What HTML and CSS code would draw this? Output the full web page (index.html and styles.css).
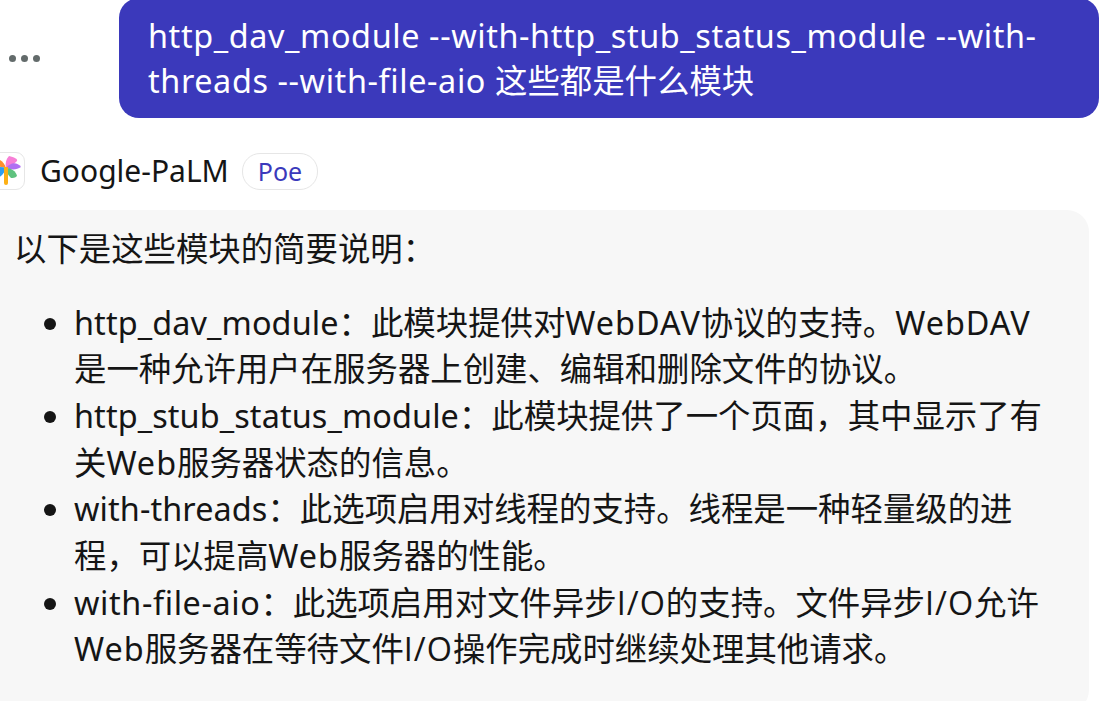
FILE: index.html
```html
<!DOCTYPE html>
<html lang="zh-CN">
<head>
    <meta charset="UTF-8">
    <title>Google-PaLM</title>
    <link rel="stylesheet" href="styles.css">
</head>
<body>
    <div class="chat">
        <!-- Question -->
        <div class="question-row">
            <div class="more-dots"><span></span><span></span><span></span></div>
            <div class="bubble"><span class="en-wide">http_dav_module --with-http_stub_status_module --with-</span><br><span class="en-wide">threads --with-file-aio </span>这些都是什么模块</div>
        </div>

        <!-- Bot name -->
        <div class="bot-row">
            <div class="bot-logo">
                <svg viewBox="0 0 30 30" width="30" height="30">
                    <path d="M15 12 C9 11 3 10 0 5 C5 1 12 3 15 12Z" fill="#ff8f2e"/>
                    <path d="M15 12 C14 7 15 3 18 0 C23 1 27 3 26 5 C23 8 19 11 15 12Z" fill="#f77fd6"/>
                    <path d="M15 12 C20 6 26 6 30 11 C26 14 20 14 15 12Z" fill="#b06ff2"/>
                    <path d="M15 12 C9 10 3 11 0 15 C1 19 4 22 7 22 C11 20 14 16 15 12Z" fill="#2f9ff0"/>
                    <path d="M15 12 C20 12 25 15 26 20 C24 22 22 22 20 22 C17 19 15 16 15 12Z" fill="#5fc27e"/>
                    <path d="M13 11 h4 v16 a2 2 0 0 1 -4 0Z" fill="#fdb015"/>
                </svg>
            </div>
            <span class="bot-name">Google-PaLM</span>
            <span class="bot-tag">Poe</span>
        </div>

        <!-- Answer -->
        <div class="answer">
            <p>以下是这些模块的简要说明：</p>
            <ul>
                <li><span class="en">http_dav_module</span>：此模块提供对<span class="en-caps">WebDAV</span>协议的支持。<span class="en-caps">WebDAV</span><br>是一种允许用户在服务器上创建、编辑和删除文件的协议。</li>
                <li><span class="en">http_stub_status_module</span>：此模块提供了一个页面，其中显示了有<br>关<span class="en-caps">Web</span>服务器状态的信息。</li>
                <li><span class="en">with-threads</span>：此选项启用对线程的支持。线程是一种轻量级的进<br>程，可以提高<span class="en-caps">Web</span>服务器的性能。</li>
                <li><span class="en-wide">with-file-aio</span>：此选项启用对文件异步<span class="io">I/O</span>的支持。文件异步<span class="io">I/O</span>允许<br><span class="en-caps">Web</span>服务器在等待文件<span class="io">I/O</span>操作完成时继续处理其他请求。</li>
            </ul>
        </div>
    </div>
</body>
</html>
```

FILE: styles.css
```css
html, body {
    margin: 0;
    padding: 0;
    height: 701px;
    overflow: hidden;
    background: white;
}
body {
    font-family: "Noto Sans", "Noto Sans CJK SC", sans-serif;
    font-size: 32.4px;
    line-height: 46.67px;
    color: #151515;
}
.en {
    letter-spacing: 0.1px;
}
.en-wide {
    letter-spacing: 0.6px;
}
.en-caps {
    letter-spacing: 1px;
}
.io {
    font-family: "Open Sans", sans-serif;
    letter-spacing: 1px;
}
.chat {
    margin-top: -2px;
}
.question-row {
    display: flex;
    align-items: center;
    padding-left: 9px;
}
.more-dots {
    display: flex;
    gap: 5px;
    width: 110px;
}
.more-dots span {
    width: 7px;
    height: 7px;
    border-radius: 50%;
    background: #636b6b;
}
.bubble {
    width: 980px;
    box-sizing: border-box;
    padding: 15px 29px;
    background: #3b39bb;
    color: white;
    line-height: 45px;
    border-radius: 20px;
    white-space: nowrap;
}
.bot-row {
    display: flex;
    align-items: center;
    margin: 34px 0 20px -13px;
    height: 38px;
    font-size: 30px;
}
.bot-logo {
    width: 36px;
    height: 36px;
    display: flex;
    align-items: center;
    justify-content: center;
    border: 1px solid #e6e6e6;
    border-radius: 9px;
    margin-right: 15px;
}
.bot-tag {
    margin-left: 13px;
    padding: 0 15px;
    height: 35px;
    line-height: 35px;
    border: 1px solid #e6e6e6;
    border-radius: 18px;
    color: #3b39bb;
    font-size: 25px;
}
.answer {
    width: 1109px;
    margin-left: -20px;
    box-sizing: border-box;
    padding: 15px 34px 40px 36px;
    background: #f7f7f7;
    border-radius: 22px;
    white-space: nowrap;
}
.answer p {
    margin: 0 0 27px -2px;
}
.answer ul {
    margin: 0;
    padding-left: 58px;
}
```
